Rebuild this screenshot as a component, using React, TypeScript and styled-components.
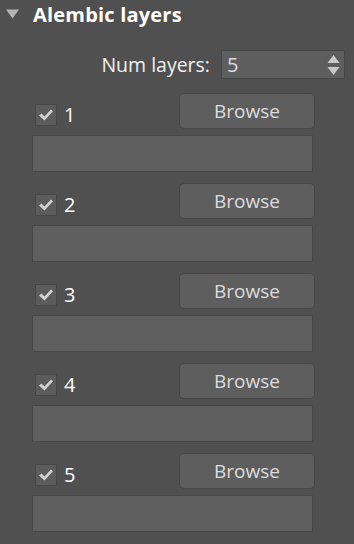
import React from "react";
import styled, { createGlobalStyle } from "styled-components";

const GlobalStyle = createGlobalStyle`
  html, body {
    margin: 0;
    padding: 0;
    background: #505050;
  }
  body {
    font-family: "Open Sans", "Noto Sans", sans-serif;
    width: 354px;
    height: 544px;
    overflow: hidden;
  }
`;

const Panel = styled.div`
  width: 354px;
  height: 544px;
  background: #505050;
  box-sizing: border-box;
`;

const Header = styled.div`
  display: flex;
  align-items: center;
  height: 28px;
  padding-left: 6px;
  gap: 14px;
`;

const Title = styled.span`
  color: #ffffff;
  font-weight: 700;
  font-size: 20px;
  letter-spacing: 0.2px;
`;

const NumRow = styled.div`
  display: flex;
  justify-content: flex-end;
  align-items: center;
  gap: 11px;
  padding-right: 9px;
  margin-top: 22px;
`;

const Label = styled.span`
  color: #f0f0f0;
  font-size: 19.5px;
`;

const Spinner = styled.div`
  width: 124px;
  height: 29px;
  box-sizing: border-box;
  background: #5e5e5e;
  border: 1px solid #474747;
  display: flex;
  align-items: center;
  justify-content: space-between;
  padding: 0 4px 0 5px;
`;

const SpinValue = styled.span`
  color: #d8dde8;
  font-size: 20px;
`;

const Layers = styled.div`
  display: flex;
  flex-direction: column;
  margin-top: 14px;
`;

const LayerBlock = styled.div`
  display: flex;
  flex-direction: column;
  gap: 6px;
  padding-left: 32px;
  margin-bottom: 11px;
`;

const TopLine = styled.div`
  display: flex;
  align-items: center;
  width: 283px;
`;

const CheckLabel = styled.label`
  display: flex;
  align-items: center;
  gap: 7px;
  margin-left: 3px;
  margin-top: 7px;
  flex: 1;
`;

const Box = styled.span`
  width: 22px;
  height: 22px;
  box-sizing: border-box;
  background: #5c5c5c;
  border: 1px solid #474747;
  display: flex;
  align-items: center;
  justify-content: center;
`;

const Num = styled.span`
  color: #ffffff;
  font-size: 20px;
  line-height: 22px;
`;

const BrowseButton = styled.button`
  width: 136px;
  height: 36px;
  box-sizing: border-box;
  background: #5e5e5e;
  border: 1px solid #474747;
  border-radius: 5px;
  color: #dcdcdc;
  font-family: "Open Sans", "Noto Sans", sans-serif;
  font-size: 19px;
  padding: 0;
`;

const PathField = styled.div`
  width: 281px;
  height: 37px;
  box-sizing: border-box;
  background: #5f5f5f;
  border: 1px solid #474747;
`;

const Arrow = () => (
  <svg width="13" height="10" viewBox="0 0 13 10">
    <path d="M0 0.5 L13 0.5 L6.5 9.5 Z" fill="#b4b4b4" />
  </svg>
);

const Arrows = () => (
  <svg width="13" height="22" viewBox="0 0 13 22">
    <path d="M6.5 1 L12.5 9 L0.5 9 Z" fill="#c8c8c8" />
    <path d="M0.5 13 L12.5 13 L6.5 21 Z" fill="#c8c8c8" />
  </svg>
);

const Check = () => (
  <svg width="16" height="14" viewBox="0 0 16 14">
    <path
      d="M1 7.5 L3.5 5.5 L6.5 8.5 L13 1.5 L15 3.2 L6.5 12.5 Z"
      fill="#d2d2d2"
    />
  </svg>
);

const layers = [1, 2, 3, 4, 5];

export default function App() {
  return (
    <>
      <GlobalStyle />
      <Panel>
        <Header>
          <Arrow />
          <Title>Alembic layers</Title>
        </Header>
        <NumRow>
          <Label>Num layers:</Label>
          <Spinner>
            <SpinValue>5</SpinValue>
            <Arrows />
          </Spinner>
        </NumRow>
        <Layers>
          {layers.map((n) => (
            <LayerBlock key={n}>
              <TopLine>
                <CheckLabel>
                  <Box>
                    <Check />
                  </Box>
                  <Num>{n}</Num>
                </CheckLabel>
                <BrowseButton>Browse</BrowseButton>
              </TopLine>
              <PathField />
            </LayerBlock>
          ))}
        </Layers>
      </Panel>
    </>
  );
}
